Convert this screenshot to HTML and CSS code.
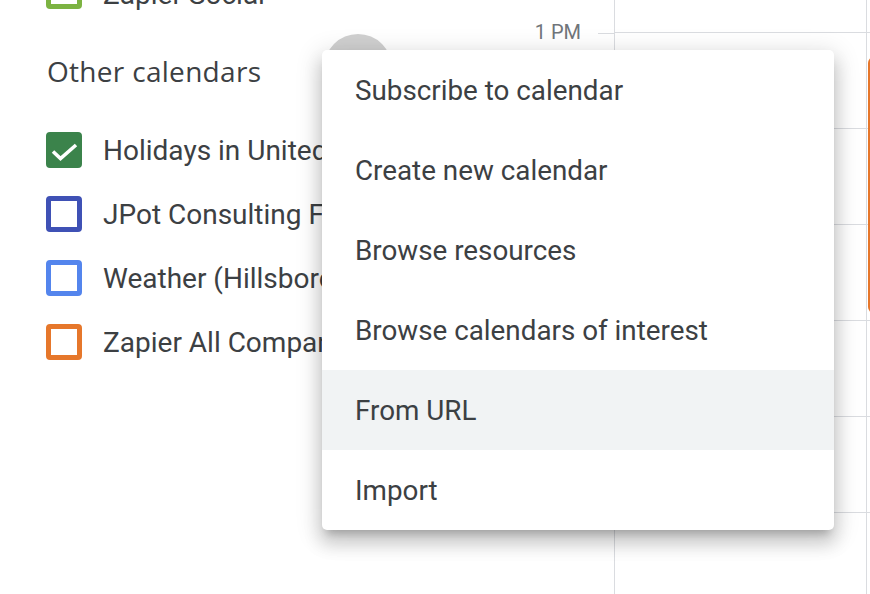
FILE: index.html
```html
<!DOCTYPE html>
<html>
<head>
<meta charset="utf-8">
<link rel="stylesheet" href="styles.css">
</head>
<body>
<div class="app">
  <aside class="sidebar">
    <div class="cal-row cal-row-first">
      <span class="box box-pistachio"></span>
      <span class="cal-name">Zapier Social</span>
    </div>
    <h2 class="section-title">Other calendars</h2>
    <div class="cal-row">
      <span class="box box-basil checked">
        <svg viewBox="0 0 36 36" width="36" height="36"><polyline points="7,19.5 14.5,26.5 30,13" fill="none" stroke="#fff" stroke-width="3.6"/></svg>
      </span>
      <span class="cal-name">Holidays in United States</span>
    </div>
    <div class="cal-row">
      <span class="box box-blueberry"></span>
      <span class="cal-name">JPot Consulting Firm</span>
    </div>
    <div class="cal-row">
      <span class="box box-peacock"></span>
      <span class="cal-name">Weather (Hillsboro)</span>
    </div>
    <div class="cal-row">
      <span class="box box-tangerine"></span>
      <span class="cal-name">Zapier All Company</span>
    </div>
  </aside>

  <div class="gutter">
    <div class="slot"><span class="time">1 PM</span><span class="tick"></span></div>
    <div class="slot"><span class="time"></span><span class="tick"></span></div>
    <div class="slot"><span class="time"></span><span class="tick"></span></div>
    <div class="slot"><span class="time"></span><span class="tick"></span></div>
    <div class="slot"><span class="time"></span><span class="tick"></span></div>
    <div class="slot"><span class="time"></span><span class="tick"></span></div>
  </div>

  <div class="day">
    <div class="hour"></div><div class="hour"></div><div class="hour"></div>
    <div class="hour"></div><div class="hour"></div><div class="hour"></div>
  </div>
  <div class="day day-last">
    <div class="hour"></div><div class="hour"></div><div class="hour"></div>
    <div class="hour"></div><div class="hour"></div><div class="hour"></div>
    <div class="event"></div>
  </div>

  <div class="hover-circle"></div>

  <ul class="menu">
    <li class="menu-item">Subscribe to calendar</li>
    <li class="menu-item">Create new calendar</li>
    <li class="menu-item">Browse resources</li>
    <li class="menu-item">Browse calendars of interest</li>
    <li class="menu-item active">From URL</li>
    <li class="menu-item">Import</li>
  </ul>
</div>
</body>
</html>
```

FILE: styles.css
```css
html, body {
  margin: 0;
  padding: 0;
  background: #fff;
}
body {
  width: 870px;
  height: 594px;
  overflow: hidden;
  font-family: Roboto, "Liberation Sans", Arial, sans-serif;
  color: #3c4043;
}
.app {
  position: relative;
  display: flex;
  width: 870px;
  height: 594px;
}

/* Sidebar */
.sidebar {
  width: 500px;
  flex: none;
  padding-left: 46px;
  box-sizing: border-box;
  margin-top: -41px;
  overflow: hidden;
}
.cal-row {
  display: flex;
  align-items: center;
  height: 64px;
  gap: 21px;
  white-space: nowrap;
}
.cal-row-first .cal-name {
  position: relative;
  top: 3px;
}
.box {
  width: 36px;
  height: 36px;
  flex: none;
  box-sizing: border-box;
  border: 5px solid;
  border-radius: 4px;
  display: block;
}
.box svg { display: block; margin: -5px; }
.box-pistachio { border-color: #7cb342; }
.box-basil { border-color: #3b834b; background: #3b834b; }
.box-blueberry { border-color: #3f51b5; }
.box-peacock { border-color: #5485ed; }
.box-tangerine { border-color: #e6772b; }
.cal-name {
  font-size: 28px;
  color: #3c4043;
}
.section-title {
  margin: 0;
  height: 95px;
  display: flex;
  align-items: center;
  padding-left: 1px;
  font-family: "Open Sans", Roboto, sans-serif;
  font-weight: 500;
  font-size: 28px;
  color: #3c4043;
  letter-spacing: 0.3px;
}

/* Time gutter */
.gutter {
  width: 114px;
  flex: none;
  padding-top: 22px;
}
.slot {
  display: flex;
  justify-content: flex-end;
  align-items: flex-start;
  height: 96px;
}
.time {
  font-size: 20px;
  line-height: 20px;
  color: #70757a;
}
.tick {
  width: 16px;
  height: 1px;
  margin-top: 11px;
  margin-left: 17px;
  background: #dadce0;
}

/* Day columns */
.day {
  position: relative;
  width: 251px;
  flex: none;
  border-left: 1px solid #dadce0;
  padding-top: 32px;
}
.day-last {
  flex: 1;
  width: auto;
}
.hour {
  height: 95px;
  border-top: 1px solid #dadce0;
}
.event {
  position: absolute;
  left: 1px;
  top: 57px;
  width: 12px;
  height: 256px;
  background: #e6772b;
  border-radius: 6px 0 0 6px;
}

/* Overlays */
.hover-circle {
  position: absolute;
  left: 324px;
  top: 34px;
  width: 68px;
  height: 68px;
  border-radius: 50%;
  background: #d0d0d0;
}
.menu {
  position: absolute;
  left: 322px;
  top: 50px;
  width: 512px;
  margin: 0;
  padding: 0;
  list-style: none;
  background: #fff;
  border-radius: 5px;
  overflow: hidden;
  box-shadow: 0 13px 17px 2px rgba(0,0,0,.14), 0 5px 24px 4px rgba(0,0,0,.12), 0 8px 8px -5px rgba(0,0,0,.2);
}
.menu-item {
  height: 80px;
  display: flex;
  align-items: center;
  padding-left: 33px;
  padding-top: 1px;
  box-sizing: border-box;
  font-size: 27.8px;
  color: #3c4043;
}
.menu-item.active {
  background: #f1f3f4;
}
```
